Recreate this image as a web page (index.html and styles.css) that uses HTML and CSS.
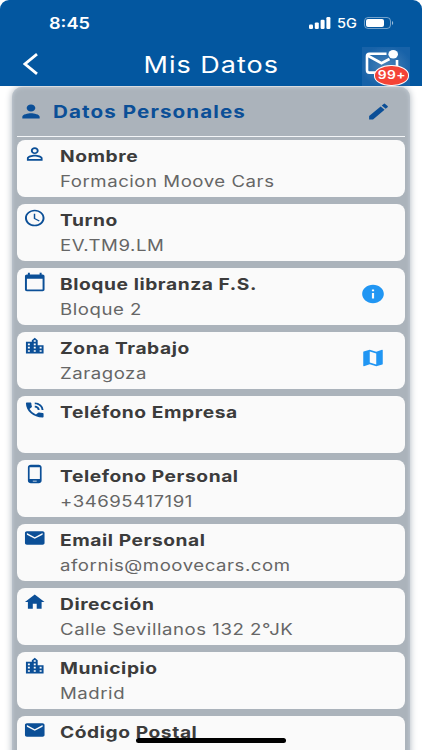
FILE: index.html
```
<!DOCTYPE html>
<html lang="es">
  <head>
    <meta charset="UTF-8" />
    <meta name="viewport" content="width=device-width, initial-scale=1.0" />
    <title>Mis Datos</title>
    <link rel="stylesheet" href="styles.css">
  </head>

  <body>
    <header class="header">
      <div class="status">
        <span class="time">8:45</span>
        <div class="status-right">
          <svg class="signal" viewBox="0 0 22 12" fill="#fff">
            <rect x="0" y="7.6" width="4" height="4.4" rx="1.2" />
            <rect x="5.8" y="5.4" width="4" height="6.6" rx="1.2" />
            <rect x="11.6" y="2.8" width="4" height="9.2" rx="1.2" />
            <rect x="17.4" y="0" width="4" height="12" rx="1.2" />
          </svg>
          <span class="network">5G</span>
          <svg class="battery" viewBox="0 0 30 12">
            <rect x="0.5" y="0.5" width="26" height="11" rx="3.5" fill="none" stroke="#fff" stroke-opacity="0.45" />
            <rect x="2" y="2" width="18" height="8" rx="2" fill="#fff" />
            <path d="M28 4c1.6.5 1.6 3.5 0 4z" fill="#fff" fill-opacity="0.6" />
          </svg>
        </div>
      </div>
      <div class="bar">
        <svg class="back" viewBox="0 0 16 22" fill="none" stroke="#fff" stroke-width="2.8">
          <path d="M14 1.2L2 11l12 9.8" />
        </svg>
        <h1 class="title">Mis Datos</h1>
        <div class="mail">
          <svg class="mail-icon" viewBox="0 0 48 39" fill="none" stroke="#fff" stroke-width="2.6">
            <path d="M24.5 6.800H7.200q-2.200 0-2.200 2.200v14q0 2.600 2.200 2.600H16" />
            <path d="M5.500 8.500L19.500 16.200l8-4.200" />
            <path d="M35 13v7" />
            <ellipse cx="31.2" cy="7.2" rx="4.8" ry="4.2" fill="#fff" stroke="none" />
          </svg>
          <span class="badge"><span>99+</span></span>
        </div>
      </div>
    </header>

    <main class="panel">
      <div class="panel-head">
        <svg class="icon" viewBox="0 0 24 24" preserveAspectRatio="none"><path d="M12 12c2.210 0 4-1.790 4-4s-1.790-4-4-4-4 1.790-4 4 1.790 4 4 4zm0 2c-2.670 0-8 1.340-8 4v2h16v-2c0-2.660-5.330-4-8-4z" /></svg>
        <h2 class="panel-title">Datos Personales</h2>
        <svg class="icon edit" viewBox="0 0 24 24" preserveAspectRatio="none"><path d="M3 17.250V21h3.750L17.810 9.940l-3.750-3.750L3 17.250zM20.710 7.040a1 1 0 000-1.410l-2.340-2.340a1 1 0 00-1.410 0l-1.830 1.830 3.750 3.750 1.830-1.830z" /></svg>
      </div>

      <div class="box">
        <svg class="icon" viewBox="0 0 24 24" preserveAspectRatio="none"><path d="M12 5.900a2.100 2.100 0 110 4.200 2.100 2.100 0 010-4.200m0 9c2.970 0 6.100 1.460 6.100 2.100v1.100H5.900V17c0-.64 3.130-2.100 6.100-2.100M12 4C9.790 4 8 5.790 8 8s1.790 4 4 4 4-1.790 4-4-1.790-4-4-4zm0 9c-2.670 0-8 1.340-8 4v3h16v-3c0-2.660-5.330-4-8-4z" /></svg>
        <div class="text">
          <h5>Nombre</h5>
          <p>Formacion Moove Cars</p>
        </div>
      </div>

      <div class="box">
        <svg class="icon" viewBox="0 0 24 24" preserveAspectRatio="none"><path d="M11.990 2C6.470 2 2 6.480 2 12s4.470 10 9.990 10C17.520 22 22 17.520 22 12S17.520 2 11.990 2zM12 20c-4.420 0-8-3.580-8-8s3.580-8 8-8 8 3.580 8 8-3.580 8-8 8zm.5-13H11v6l5.250 3.150.75-1.230-4.500-2.670z" /></svg>
        <div class="text">
          <h5>Turno</h5>
          <p>EV.TM9.LM</p>
        </div>
      </div>

      <div class="box">
        <svg class="icon" viewBox="0 0 24 24" preserveAspectRatio="none"><path d="M20 3h-1V1h-2v2H7V1H5v2H4c-1.100 0-2 .9-2 2v16c0 1.100.9 2 2 2h16c1.100 0 2-.9 2-2V5c0-1.100-.9-2-2-2zm0 18H4V8h16v13z" /></svg>
        <div class="text">
          <h5>Bloque libranza F.S.</h5>
          <p>Bloque 2</p>
        </div>
        <svg class="action" viewBox="0 0 24 24" preserveAspectRatio="none"><path d="M12 2C6.480 2 2 6.480 2 12s4.480 10 10 10 10-4.480 10-10S17.520 2 12 2zm1 15h-2v-6h2v6zm0-8h-2V7h2v2z" /></svg>
      </div>

      <div class="box">
        <svg class="icon" viewBox="0 0 24 24" preserveAspectRatio="none"><path d="M15 11V5l-3-3-3 3v2H3v14h18V11h-6zm-8 8H5v-2h2v2zm0-4H5v-2h2v2zm0-4H5V9h2v2zm6 8h-2v-2h2v2zm0-4h-2v-2h2v2zm0-4h-2V9h2v2zm0-4h-2V5h2v2zm6 12h-2v-2h2v2zm0-4h-2v-2h2v2z" /></svg>
        <div class="text">
          <h5>Zona Trabajo</h5>
          <p>Zaragoza</p>
        </div>
        <svg class="action" viewBox="0 0 24 24" preserveAspectRatio="none"><path d="M20.500 3l-.16.030L15 5.100 9 3 3.360 4.900c-.21.070-.36.250-.36.480V20.500c0 .28.220.5.500.5l.16-.030L9 18.900l6 2.100 5.640-1.900c.21-.070.36-.25.36-.48V3.500c0-.28-.22-.5-.5-.5zM15 19l-6-2.110V5l6 2.110V19z" /></svg>
      </div>

      <div class="box">
        <svg class="icon" viewBox="0 0 24 24" preserveAspectRatio="none"><path d="M20 15.500c-1.250 0-2.450-.2-3.570-.57a1.020 1.020 0 00-1.020.24l-2.200 2.200a15.070 15.070 0 01-6.590-6.590l2.200-2.200c.28-.28.360-.67.250-1.020A11.360 11.360 0 018.500 4c0-.55-.45-1-1-1H4c-.55 0-1 .45-1 1 0 9.390 7.610 17 17 17 .55 0 1-.45 1-1v-3.500c0-.55-.45-1-1-1zM19 12h2a9 9 0 00-9-9v2c3.870 0 7 3.130 7 7zm-4 0h2c0-2.760-2.240-5-5-5v2c1.660 0 3 1.340 3 3z" /></svg>
        <div class="text">
          <h5>Teléfono Empresa</h5>
          <p></p>
        </div>
      </div>

      <div class="box">
        <svg class="icon" viewBox="0 0 24 24" preserveAspectRatio="none"><path d="M16 1H8C6.340 1 5 2.340 5 4v16c0 1.660 1.340 3 3 3h8c1.660 0 3-1.340 3-3V4c0-1.660-1.340-3-3-3zm-2 20h-4v-1h4v1zm3.250-3H6.750V4h10.500v14z" /></svg>
        <div class="text">
          <h5>Telefono Personal</h5>
          <p>+34695417191</p>
        </div>
      </div>

      <div class="box">
        <svg class="icon" viewBox="0 0 24 24" preserveAspectRatio="none"><path d="M20 4H4c-1.100 0-2 .9-2 2v12c0 1.100.9 2 2 2h16c1.100 0 2-.9 2-2V6c0-1.100-.9-2-2-2zm0 4l-8 5-8-5V6l8 5 8-5v2z" /></svg>
        <div class="text">
          <h5>Email Personal</h5>
          <p>afornis@moovecars.com</p>
        </div>
      </div>

      <div class="box">
        <svg class="icon" viewBox="0 0 24 24" preserveAspectRatio="none"><path d="M10 20v-6h4v6h5v-8h3L12 3 2 12h3v8z" /></svg>
        <div class="text">
          <h5>Dirección</h5>
          <p>Calle Sevillanos 132 2°JK</p>
        </div>
      </div>

      <div class="box">
        <svg class="icon" viewBox="0 0 24 24" preserveAspectRatio="none"><path d="M15 11V5l-3-3-3 3v2H3v14h18V11h-6zm-8 8H5v-2h2v2zm0-4H5v-2h2v2zm0-4H5V9h2v2zm6 8h-2v-2h2v2zm0-4h-2v-2h2v2zm0-4h-2V9h2v2zm0-4h-2V5h2v2zm6 12h-2v-2h2v2zm0-4h-2v-2h2v2z" /></svg>
        <div class="text">
          <h5>Municipio</h5>
          <p>Madrid</p>
        </div>
      </div>

      <div class="box">
        <svg class="icon" viewBox="0 0 24 24" preserveAspectRatio="none"><path d="M20 4H4c-1.100 0-2 .9-2 2v12c0 1.100.9 2 2 2h16c1.100 0 2-.9 2-2V6c0-1.100-.9-2-2-2zm0 4l-8 5-8-5V6l8 5 8-5v2z" /></svg>
        <div class="text">
          <h5>Código Postal</h5>
          <p></p>
        </div>
      </div>
    </main>
    <div class="home-bar"></div>
  </body>
</html>
```

FILE: styles.css
```
* {
  box-sizing: border-box;
}

body {
  margin: 0;
  height: 750px;
  overflow: hidden;
  background-color: #fff;
  font-family: Inter, "Liberation Sans", sans-serif;
}

h1, h2, h5, p {
  margin: 0;
}

svg {
  display: block;
  flex: none;
}

.header {
  position: relative;
  z-index: 1;
  height: 86px;
  background-color: #0357a0;
  border-radius: 9px 9px 0 0;
}

.status {
  display: flex;
  justify-content: space-between;
  align-items: center;
  height: 46px;
  padding: 0 28px 0 49px;
  color: #fff;
}

.time {
  font-size: 15.5px;
  font-weight: 600;
  transform: scaleX(1.17);
  transform-origin: left;
}

.status-right {
  display: flex;
  align-items: center;
}

.signal {
  width: 22px;
  height: 12px;
}

.network {
  width: 33px;
  padding-left: 6px;
  font-size: 13px;
  font-weight: 500;
  transform: scaleX(1.12);
  transform-origin: 6px;
}

.battery {
  width: 30px;
  height: 12px;
}

.bar {
  display: flex;
  align-items: center;
  height: 40px;
  padding: 0 12px 0 23px;
}

.back {
  width: 16px;
  height: 22px;
  margin-top: -4px;
}

.title {
  flex: 1;
  margin-top: -3px;
  padding-left: 18px;
  color: #fff;
  font-size: 22.5px;
  font-weight: 400;
  letter-spacing: 0.85px;
  line-height: 30px;
  text-align: center;
  transform: scaleX(1.2);
}

.mail {
  position: relative;
  width: 48px;
  height: 39px;
  background: radial-gradient(#4b83b8, #1762a8 75%);
}

.mail-icon {
  width: 48px;
  height: 39px;
}

.badge {
  position: absolute;
  left: 12px;
  top: 18px;
  display: flex;
  align-items: center;
  justify-content: center;
  width: 35px;
  height: 21px;
  border: 1px solid #fff;
  border-radius: 17px / 10px;
  background-color: #f44336;
  color: #fff;
  font-size: 11.5px;
  font-weight: 600;
  letter-spacing: 0.4px;
}

.badge span {
  transform: scaleX(1.2);
}

.panel {
  margin: 1px 12px 0;
  padding: 0 5.5px 0 5px;
  height: 700px;
  border-radius: 10px 10px 0 0;
  background-color: #abb3bb;
  box-shadow: 0 0 7px #abb3bb, inset 0 0 4px #c8d0d9;
}

.panel-head {
  display: flex;
  align-items: center;
  height: 50px;
  margin-bottom: 3px;
  padding: 0 14px 0 0.5px;
  border-bottom: 1px solid #f3f5f7;
}

.panel-title {
  margin-left: 9.5px;
  color: #0b4f97;
  font-size: 17.2px;
  font-weight: 700;
  letter-spacing: 0.9px;
  line-height: 24px;
  white-space: nowrap;
  transform: scaleX(1.2);
  transform-origin: left;
}

.icon {
  width: 23.5px;
  height: 20px;
  fill: #0b4f97;
}

.panel-head .icon {
  width: 26px;
  height: 21px;
}

.panel-head .edit {
  width: 25px;
  margin-left: auto;
}

.box {
  display: flex;
  height: 57px;
  margin-bottom: 7px;
  padding: 4px 18.5px 0 6px;
  border-radius: 8px;
  background-color: #fafafa;
}

.text {
  margin-left: 13.5px;
  white-space: nowrap;
  transform: scaleX(1.2);
  transform-origin: left;
}

.text h5 {
  color: #3c3c3c;
  font-size: 16px;
  font-weight: 650;
  letter-spacing: 0.47px;
  line-height: 25px;
}

.text p {
  color: #666;
  font-size: 15.5px;
  letter-spacing: 0.45px;
  line-height: 25px;
}

.action {
  align-self: center;
  width: 26px;
  height: 22px;
  margin: -9px 0 0 auto;
  fill: #2196f3;
}

.home-bar {
  position: absolute;
  left: 136px;
  top: 738px;
  width: 150px;
  height: 5px;
  border-radius: 3px;
  background-color: #000;
}
```
